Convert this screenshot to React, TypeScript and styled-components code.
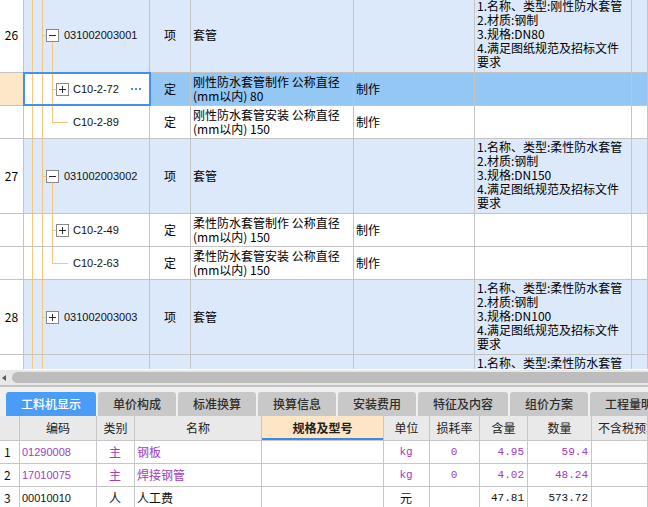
import React from 'react';
import styled, { createGlobalStyle } from 'styled-components';

const GlobalStyle = createGlobalStyle`
  html, body { margin: 0; padding: 0; background: #fff; }
  body {
    font-family: "Noto Sans CJK SC", "Liberation Sans", sans-serif;
    font-size: 12px;
    color: #000;
  }
  * { box-sizing: border-box; }
`;

const ORANGE = '#fbc67a';
const GRID_LINE = '#c4c4c4';
const PURPLE = '#a03cc0';

const Page = styled.div`
  width: 648px;
  height: 507px;
  overflow: hidden;
  display: flex;
  flex-direction: column;
  background: #fff;
`;

/* ---------- top tree grid ---------- */

const GridViewport = styled.div`
  flex: none;
  height: 369px;
  overflow: hidden;
`;

const GridBody = styled.div`
  margin-top: -2px;
`;

type Kind = 'item' | 'quota';

const Row = styled.div<{ $kind: Kind; $selected?: boolean }>`
  display: grid;
  grid-template-columns: 24px 126px 41px 163px 121px 157px 1fr;
  height: ${(p) => (p.$kind === 'item' ? 75 : 33)}px;
  border-bottom: 1px solid ${GRID_LINE};
  background: ${(p) => (p.$selected ? '#94c7f3' : p.$kind === 'item' ? '#dce9fb' : '#fff')};
`;

const Cell = styled.div`
  min-width: 0;
  overflow: hidden;
  border-right: 1px solid ${GRID_LINE};
  display: flex;
  align-items: center;
  padding: 0 2px;
  line-height: 14px;
  white-space: nowrap;
`;

const NumCell = styled(Cell)<{ $selected?: boolean }>`
  justify-content: center;
  background: ${(p) => (p.$selected ? '#fde7c9' : '#fff')};
`;

const TreeCell = styled(Cell)<{ $selected?: boolean }>`
  padding: 0;
  background: ${(p) => (p.$selected ? '#fff' : 'transparent')};
  outline: ${(p) => (p.$selected ? '2px solid #3f92f0' : 'none')};
  outline-offset: -1px;
`;

const TypeCell = styled(Cell)`
  justify-content: center;
`;

const LinesCell = styled(Cell)<{ $top?: boolean }>`
  overflow: visible;
  flex-direction: column;
  align-items: flex-start;
  justify-content: ${(p) => (p.$top ? 'flex-start' : 'center')};
  padding-top: ${(p) => (p.$top ? '1px' : '0')};
`;

const Line = styled.div`
  white-space: nowrap;
`;

const GuideSvg = styled.svg`
  flex: none;
  display: block;
  shape-rendering: crispEdges;
`;

const CodeText = styled.span`
  font-family: "Liberation Sans", "Noto Sans CJK SC", sans-serif;
  font-size: 11px;
  color: #111;
`;

const MoreDots = styled.svg`
  flex: none;
  margin-left: auto;
  margin-right: 8px;
  display: block;
`;

type TreeRow = {
  kind: Kind;
  num?: string;
  code: string;
  type: string;
  name: string[];
  feature?: string;
  desc?: string[];
  box?: 'plus' | 'minus' | null;
  last?: boolean;
  selected?: boolean;
};

function TreeGuides({ row, h }: { row: TreeRow; h: number }) {
  const item = row.kind === 'item';
  const w = item ? 40 : 49;
  const mid = Math.floor(h / 2);
  const bx = item ? 22 : 32;
  return (
    <GuideSvg width={w} height={h} viewBox={`0 0 ${w} ${h}`}>
      <rect x={8} y={0} width={1} height={h} fill={ORANGE} />
      <rect x={18} y={0} width={1} height={h} fill={ORANGE} />
      {item ? (
        <>
          <rect x={19} y={mid} width={3} height={1} fill={ORANGE} />
          {row.box === 'minus' && (
            <rect x={28} y={mid + 7} width={1} height={h - mid - 7} fill={ORANGE} />
          )}
        </>
      ) : (
        <>
          <rect x={28} y={0} width={1} height={row.last ? mid + 1 : h} fill={ORANGE} />
          <rect x={29} y={mid} width={row.box ? 3 : 15} height={1} fill={ORANGE} />
        </>
      )}
      {row.box && (
        <>
          <rect
            x={bx + 0.5}
            y={mid - 5.5}
            width={12}
            height={12}
            fill="#fff"
            stroke="#8a8a8a"
            strokeWidth={1}
          />
          <rect x={bx + 3} y={mid} width={7} height={1} fill="#2a2a2a" />
          {row.box === 'plus' && <rect x={bx + 6} y={mid - 3} width={1} height={7} fill="#2a2a2a" />}
        </>
      )}
    </GuideSvg>
  );
}

const rigidDesc = (dn: string) => [
  '1.名称、类型:刚性防水套管',
  '2.材质:钢制',
  `3.规格:${dn}`,
  '4.满足图纸规范及招标文件',
  '要求',
];
const softDesc = (dn: string) => [
  '1.名称、类型:柔性防水套管',
  '2.材质:钢制',
  `3.规格:${dn}`,
  '4.满足图纸规范及招标文件',
  '要求',
];

const treeRows: TreeRow[] = [
  { kind: 'item', num: '26', code: '031002003001', type: '项', name: ['套管'], desc: rigidDesc('DN80'), box: 'minus' },
  {
    kind: 'quota',
    code: 'C10-2-72',
    type: '定',
    name: ['刚性防水套管制作 公称直径', '(mm以内) 80'],
    feature: '制作',
    box: 'plus',
    selected: true,
  },
  {
    kind: 'quota',
    code: 'C10-2-89',
    type: '定',
    name: ['刚性防水套管安装 公称直径', '(mm以内) 150'],
    feature: '制作',
    box: null,
    last: true,
  },
  { kind: 'item', num: '27', code: '031002003002', type: '项', name: ['套管'], desc: softDesc('DN150'), box: 'minus' },
  {
    kind: 'quota',
    code: 'C10-2-49',
    type: '定',
    name: ['柔性防水套管制作 公称直径', '(mm以内) 150'],
    feature: '制作',
    box: 'plus',
  },
  {
    kind: 'quota',
    code: 'C10-2-63',
    type: '定',
    name: ['柔性防水套管安装 公称直径', '(mm以内) 150'],
    feature: '制作',
    box: null,
    last: true,
  },
  { kind: 'item', num: '28', code: '031002003003', type: '项', name: ['套管'], desc: softDesc('DN100'), box: 'plus' },
  /* partially visible row: only its first feature line shows above the scrollbar */
  { kind: 'item', code: '', type: '', name: [], desc: ['1.名称、类型:柔性防水套管'], box: null },
];

/* ---------- scrollbar / tabs ---------- */

const HScroll = styled.div`
  flex: none;
  height: 16px;
  border-top: 1px solid #fff;
  background: #e8e8e8;
  display: flex;
  align-items: center;
  padding-left: 2px;
`;

const ArrowLeft = styled.div`
  flex: none;
  width: 0;
  height: 0;
  border-top: 3px solid transparent;
  border-bottom: 3px solid transparent;
  border-right: 4px solid #5a5a5a;
  margin-right: 6px;
`;

const Thumb = styled.div`
  flex: 1;
  height: 11px;
  border-radius: 6px 0 0 6px;
  background: #bdbdbd;
`;

const Divider = styled.div`
  flex: none;
  height: 2px;
  background: #c3c3c3;
`;

const TabBar = styled.div`
  flex: none;
  height: 29px;
  padding: 5px 0 0 6px;
  background: #f0f0f0;
  display: flex;
  align-items: flex-end;
  gap: 2px;
  overflow: hidden;
`;

const Tab = styled.div<{ $active?: boolean }>`
  flex: none;
  height: 24px;
  padding: 0 15px;
  border-radius: 3px 3px 0 0;
  background: ${(p) => (p.$active ? '#4a9df7' : '#c8c8c8')};
  color: ${(p) => (p.$active ? '#fff' : '#2e2e2e')};
  font-size: 12px;
  font-weight: 500;
  line-height: 16px;
  display: flex;
  align-items: center;
  white-space: nowrap;
`;

const tabs = ['工料机显示', '单价构成', '标准换算', '换算信息', '安装费用', '特征及内容', '组价方案', '工程量明细'];

/* ---------- bottom table ---------- */

const SUB_COLS = '20px 77px 38px 127px 122px 46px 50px 48px 64px 1fr';

const SubHeader = styled.div`
  flex: none;
  display: grid;
  grid-template-columns: ${SUB_COLS};
  height: 25px;
  background: #e9e9e9;
  border-bottom: 1px solid #c6c6c6;
`;

const HeadCell = styled.div<{ $hl?: boolean; $left?: boolean }>`
  min-width: 0;
  overflow: hidden;
  white-space: nowrap;
  line-height: 16px;
  border-right: 1px solid #c6c6c6;
  display: flex;
  align-items: center;
  justify-content: ${(p) => (p.$left ? 'flex-start' : 'center')};
  padding-left: ${(p) => (p.$left ? '6px' : '0')};
  color: #222;
  background: ${(p) => (p.$hl ? '#fde5c6' : 'transparent')};
  font-weight: ${(p) => (p.$hl ? 'bold' : 'normal')};
  box-shadow: ${(p) => (p.$hl ? 'inset 0 -2px 0 #3b8ae6' : 'none')};
`;

const SubRow = styled.div`
  flex: none;
  display: grid;
  grid-template-columns: ${SUB_COLS};
  height: 23px;
  background: #fff;
  border-bottom: 1px solid #c6c6c6;
`;

const DataCell = styled.div<{ $align?: 'left' | 'center' | 'right'; $purple?: boolean; $mono?: boolean; $code?: boolean }>`
  min-width: 0;
  overflow: hidden;
  white-space: nowrap;
  line-height: 16px;
  border-right: 1px solid #c6c6c6;
  display: flex;
  align-items: center;
  padding: 0 3px 0 2px;
  justify-content: ${(p) =>
    p.$align === 'center' ? 'center' : p.$align === 'right' ? 'flex-end' : 'flex-start'};
  color: ${(p) => (p.$purple ? PURPLE : '#111')};
  font-family: ${(p) =>
    p.$mono
      ? '"Liberation Mono", "Noto Sans CJK SC", monospace'
      : p.$code
      ? '"Liberation Sans", "Noto Sans CJK SC", sans-serif'
      : 'inherit'};
  font-size: ${(p) => (p.$mono || p.$code ? '11px' : '12px')};
`;

const RowNum = styled(DataCell)`
  padding-left: 4px;
`;

type SubItem = {
  n: string;
  code: string;
  cat: string;
  name: string;
  unit: string;
  unitMono: boolean;
  loss: string;
  content: string;
  qty: string;
  purple: boolean;
};

const subItems: SubItem[] = [
  { n: '1', code: '01290008', cat: '主', name: '钢板', unit: 'kg', unitMono: true, loss: '0', content: '4.95', qty: '59.4', purple: true },
  { n: '2', code: '17010075', cat: '主', name: '焊接钢管', unit: 'kg', unitMono: true, loss: '0', content: '4.02', qty: '48.24', purple: true },
  { n: '3', code: '00010010', cat: '人', name: '人工费', unit: '元', unitMono: false, loss: '', content: '47.81', qty: '573.72', purple: false },
];

export default function App() {
  return (
    <>
      <GlobalStyle />
      <Page>
        <GridViewport>
          <GridBody>
            {treeRows.map((r, i) => {
              const h = r.kind === 'item' ? 74 : 32;
              return (
                <Row key={i} $kind={r.kind} $selected={r.selected}>
                  <NumCell $selected={r.selected}>{r.num ?? ''}</NumCell>
                  <TreeCell $selected={r.selected}>
                    <TreeGuides row={r} h={h} />
                    {r.code && <CodeText>{r.code}</CodeText>}
                    {r.selected && (
                      <MoreDots width={10} height={2} viewBox="0 0 10 2">
                        <rect x={0} y={0} width={2} height={2} fill="#3a8ee6" />
                        <rect x={4} y={0} width={2} height={2} fill="#3a8ee6" />
                        <rect x={8} y={0} width={2} height={2} fill="#3a8ee6" />
                      </MoreDots>
                    )}
                  </TreeCell>
                  <TypeCell>{r.type}</TypeCell>
                  <LinesCell>
                    {r.name.map((l, j) => (
                      <Line key={j}>{l}</Line>
                    ))}
                  </LinesCell>
                  <Cell>{r.feature ?? ''}</Cell>
                  <LinesCell $top>
                    {(r.desc ?? []).map((l, j) => (
                      <Line key={j}>{l}</Line>
                    ))}
                  </LinesCell>
                  <Cell />
                </Row>
              );
            })}
          </GridBody>
        </GridViewport>

        <HScroll>
          <ArrowLeft />
          <Thumb />
        </HScroll>
        <Divider />

        <TabBar>
          {tabs.map((t, i) => (
            <Tab key={t} $active={i === 0}>
              {t}
            </Tab>
          ))}
        </TabBar>

        <SubHeader>
          <HeadCell />
          <HeadCell>编码</HeadCell>
          <HeadCell>类别</HeadCell>
          <HeadCell>名称</HeadCell>
          <HeadCell $hl>规格及型号</HeadCell>
          <HeadCell>单位</HeadCell>
          <HeadCell>损耗率</HeadCell>
          <HeadCell>含量</HeadCell>
          <HeadCell>数量</HeadCell>
          <HeadCell $left>不含税预算价</HeadCell>
        </SubHeader>

        {subItems.map((s) => (
          <SubRow key={s.n}>
            <RowNum>{s.n}</RowNum>
            <DataCell $code $purple={s.purple}>{s.code}</DataCell>
            <DataCell $align="center" $purple={s.purple}>{s.cat}</DataCell>
            <DataCell $purple={s.purple}>{s.name}</DataCell>
            <DataCell />
            <DataCell $align="center" $mono={s.unitMono} $purple={s.purple}>{s.unit}</DataCell>
            <DataCell $align="center" $mono $purple={s.purple}>{s.loss}</DataCell>
            <DataCell $align="right" $mono $purple={s.purple}>{s.content}</DataCell>
            <DataCell $align="right" $mono $purple={s.purple}>{s.qty}</DataCell>
            <DataCell />
          </SubRow>
        ))}
      </Page>
    </>
  );
}
